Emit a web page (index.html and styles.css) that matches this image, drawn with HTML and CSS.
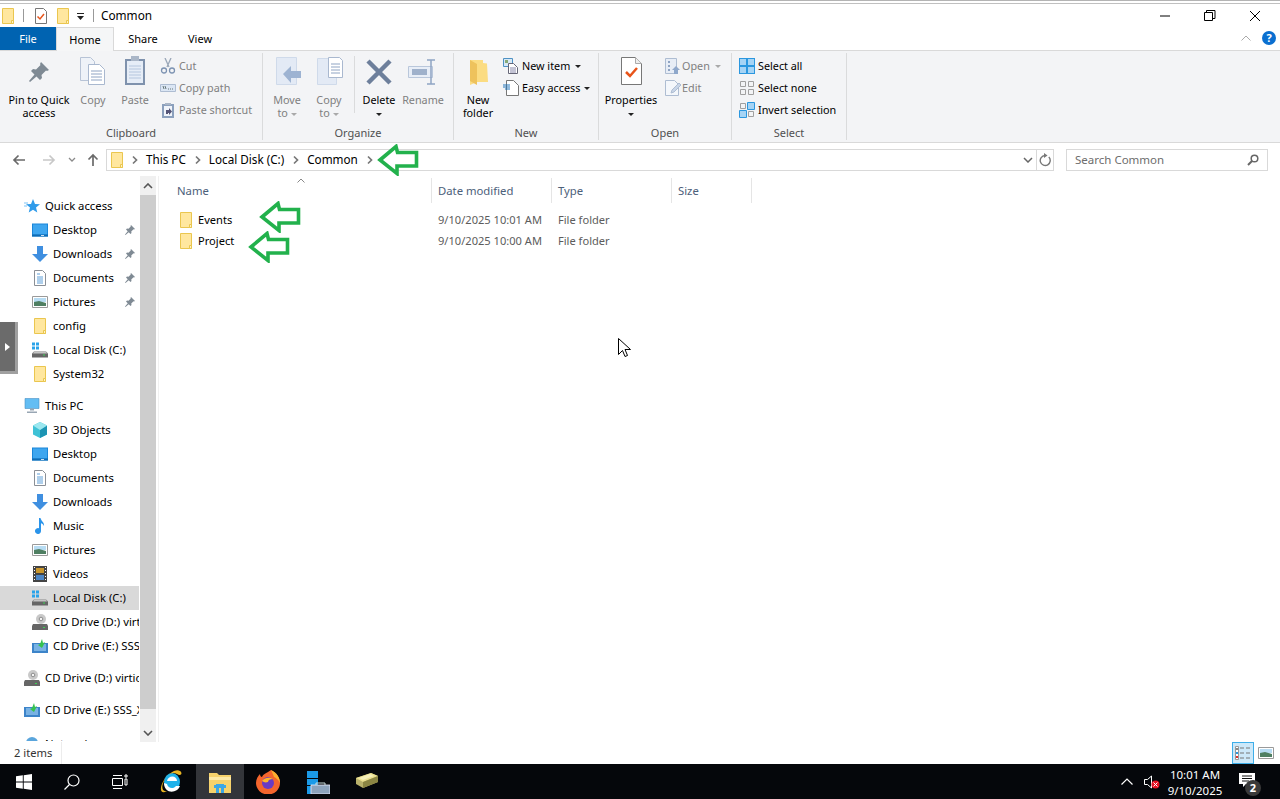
FILE: index.html
```html
<!DOCTYPE html>
<html lang="en">
<head>
<meta charset="utf-8">
<title>Common</title>
<link rel="stylesheet" href="styles.css">
</head>
<body>
<svg class="defs" aria-hidden="true">
  <symbol id="folder" viewBox="0 0 12 16"><path d="M.5.5h11v15H.5z" fill="#ffe79f" stroke="#eac64f"/><path d="M9.5 12.5h2v3h-2z" fill="#fff3c4" stroke="#eac64f"/></symbol>
  <symbol id="pin" viewBox="0 0 24 24"><path d="M14 2l8 8-2 1-1-.5-4.500 4.500.5 3-2 2-3.500-3.500L3 22l-1-1 5.500-6.500L4 11l2-2 3 .5L13.500 5 13 4z" fill="#7f8a94"/></symbol>
  <symbol id="desktop" viewBox="0 0 16 13"><path d="M0 0h16v13H0z" fill="#1a86d9"/><path d="M1 1h14v10H1z" fill="#3ea6ef"/><path d="M0 11h16v2H0z" fill="#0f6cb5"/><path d="M9 11.500h3v.8H9z" fill="#fff"/></symbol>
  <symbol id="download" viewBox="0 0 16 16"><path d="M5 0h6v8h5l-8 8-8-8h5z" fill="#3f8fe0"/></symbol>
  <symbol id="docs" viewBox="0 0 12 16"><path d="M.5.5h8l3 3v12H.5z" fill="#fff" stroke="#8a8f96"/><path d="M3 4h3M3 7h6M3 9h6M3 11h6M3 13h6" stroke="#5f9fd8"/></symbol>
  <symbol id="pics" viewBox="0 0 16 12"><path d="M.5.5h15v11H.5z" fill="#fff" stroke="#9a9a9a"/><path d="M2 2h12v4H2z" fill="#b7dcf3"/><path d="M2 6l5-1 7 2v3H2z" fill="#4f7f62"/></symbol>
  <symbol id="disk" viewBox="0 0 16 15"><path d="M0 0h3v3H0zM4 0h3v3H4zM0 4h3v3H0zM4 4h3v3H4z" fill="#2aa3ea"/><path d="M2 9h12l2 2v4H0v-4z" fill="#666"/><path d="M2 9h12l1 2H1z" fill="#c4c4c4"/><path d="M11 12h2v1h-2z" fill="#39d353"/></symbol>
  <symbol id="cd" viewBox="0 0 16 16"><circle cx="9" cy="5" r="5" fill="#c9c9c9"/><circle cx="9" cy="5" r="1.800" fill="#f3f3f3" stroke="#8d8d8d"/><path d="M1 10h14l1 2v4H0v-4z" fill="#666"/><path d="M11 13h2v1h-2z" fill="#39d353"/></symbol>
  <symbol id="cdset" viewBox="0 0 16 14"><path d="M0 4h16v10H0z" fill="#3d84c9"/><path d="M2 5h12v7H2z" fill="#79b2e4"/><path d="M10 0l1 4 2-1-3 6-4-3 2-1z" fill="#36c24f"/></symbol>
  <symbol id="chev" viewBox="0 0 6 10"><path d="M1 1.500l3.500 3.500-3.500 3.500" fill="none" stroke="#777" stroke-width="1.700"/></symbol>
  <symbol id="green" viewBox="0 0 42 32"><path d="M3 16L19 2.500l1.500 6H39.500V22H20v7.500z" fill="none" stroke="#22b14c" stroke-width="3.600"/></symbol>
</svg>

<div class="frame-lines"></div>

<header class="titlebar">
  <svg class="ic-folder"><use href="#folder"/></svg>
  <i class="qsep q1"></i>
  <svg class="ic-prop" viewBox="0 0 12 16"><path d="M.5.5h8l3 3v12H.5z" fill="#fff" stroke="#777"/><path d="M2.500 8.500l2.500 2.500 4-5" fill="none" stroke="#e8541a" stroke-width="1.500"/></svg>
  <svg class="ic-folder q2"><use href="#folder"/></svg>
  <svg class="ic-qdrop" viewBox="0 0 8 8"><path d="M0 1h7v1H0zM0 4h7L3.500 8z" fill="#222"/></svg>
  <i class="qsep q3"></i>
  <span class="wintitle">Common</span>
  <div class="winbtns">
    <svg class="wb" viewBox="0 0 12 12"><path d="M1 6h10" stroke="#000"/></svg>
    <svg class="wb" viewBox="0 0 12 12"><path d="M.5 2.500h8v8h-8zM2.500 2.500v-2h8.500v8h-2.500" fill="none" stroke="#000"/></svg>
    <svg class="wb" viewBox="0 0 12 12"><path d="M1 1l10 10M11 1L1 11" stroke="#000"/></svg>
  </div>
</header>

<nav class="tabs">
  <span class="tab file">File</span>
  <span class="tab home">Home</span>
  <span class="tab share">Share</span>
  <span class="tab view">View</span>
  <svg class="collapse" viewBox="0 0 10 6"><path d="M.5 5.500L5 1l4.500 4.500" fill="none" stroke="#aaa"/></svg>
  <span class="help">?</span>
</nav>

<section class="ribbon">
  <div class="group g-clip">
    <div class="tools">
      <div class="big w-pin"><svg class="bigic" viewBox="0 0 32 32"><use href="#pin" x="4" y="4" width="24" height="24"/></svg><span>Pin to Quick access</span></div>
      <div class="big w-copy dis"><svg class="bigic" viewBox="0 0 32 32"><path d="M3.500 1.500h10l4 4v19h-14z" fill="#eef2f8" stroke="#b7c3d6"/><path d="M11.500 8.500h11l5 5v15h-16z" fill="#fff" stroke="#a9b8cf"/><path d="M14 15h11M14 18h11M14 21h11M14 24h11" stroke="#8fa4c3"/></svg><span>Copy</span></div>
      <div class="big w-paste dis"><svg class="bigic" viewBox="0 0 32 32"><path d="M6 3h20v26H6z" fill="#7f92ad"/><path d="M8 5h16v22H8z" fill="#e6edf7"/><path d="M12 0h8v5h-8z" fill="#aab6c7"/><path d="M10 10h12M10 13h12M10 16h12M10 19h12M10 22h12" stroke="#b5c6de"/></svg><span>Paste</span></div>
      <div class="smalls s-clip">
        <div class="sm dis"><svg class="smic" viewBox="0 0 16 16"><path d="M5 0l4 9M11 0L7 9" stroke="#9aa7b8" stroke-width="1.300"/><circle cx="4" cy="12.500" r="2.500" fill="none" stroke="#7d93b2" stroke-width="1.300"/><circle cx="12" cy="12.500" r="2.500" fill="none" stroke="#7d93b2" stroke-width="1.300"/></svg>Cut</div>
        <div class="sm dis"><svg class="smic" viewBox="0 0 16 16"><path d="M.5 4.500h15v7H.5z" fill="#dbe6f4" stroke="#aebdd2"/><path d="M3 6l1 3M5 6l1 3M8 9h1M10 9h1M12 9h1" stroke="#677"/></svg>Copy path</div>
        <div class="sm dis"><svg class="smic" viewBox="0 0 16 16"><path d="M2 2h12v14H2z" fill="#8ba0bd"/><path d="M4 4h8v10H4z" fill="#f0f4fa"/><path d="M5 1h6v2H5z" fill="#aab6c7"/><path d="M6 12V8h3V6l3 3.500L9 13v-2H8v1z" fill="#557"/></svg>Paste shortcut</div>
      </div>
    </div>
    <div class="glabel">Clipboard</div>
  </div>

  <div class="group g-org">
    <div class="tools">
      <div class="big w-move dis"><svg class="bigic" viewBox="0 0 32 32"><path d="M5.500 1.500h20v27h-20z" fill="#e3eaf5" stroke="#cfdaea"/><path d="M12 18l8-8v5h10v7H20v5z" fill="#9db3d2"/></svg><span>Move<br>to <em class="cd"></em></span></div>
      <div class="big w-cpto dis"><svg class="bigic" viewBox="0 0 32 32"><path d="M4.500 2.500h19v26h-19z" fill="#e3eaf5" stroke="#cfdaea"/><path d="M15.500 1.500h11l3 3v17h-14z" fill="#fff" stroke="#a9b8cf"/><path d="M18 8h9M18 11h9M18 14h9M18 17h9" stroke="#8fa4c3"/></svg><span>Copy<br>to <em class="cd"></em></span></div>
      <i class="vsep"></i>
      <div class="big w-del"><svg class="bigic" viewBox="0 0 32 32"><path d="M5 5l22 22M27 5L5 27" stroke="#6d7f9b" stroke-width="4.500"/></svg><span>Delete<br><em class="cd dark"></em></span></div>
      <div class="big w-ren dis"><svg class="bigic" viewBox="0 0 32 32"><path d="M1.500 10.500h24v11h-24z" fill="#e8eef7" stroke="#b9c7db"/><path d="M5 13h15v6H5z" fill="#9fb1cb"/><path d="M24 4v24M20 4h8M20 28h8" fill="none" stroke="#8fa4c3" stroke-width="1.500"/></svg><span>Rename</span></div>
    </div>
    <div class="glabel">Organize</div>
  </div>

  <div class="group g-new">
    <div class="tools">
      <div class="big w-newf"><svg class="bigic" viewBox="0 0 32 32"><path d="M8 4h13v3l4 .5L26 26H15l-7 3z" fill="#fbdc82"/><path d="M8 4l7 4v21l-7-4z" fill="#eec25c"/></svg><span>New<br>folder</span></div>
      <div class="smalls s-new">
        <div class="sm"><svg class="smic" viewBox="0 0 16 16"><path d="M.5.500h9v8h-9z" fill="#d8e9f6" stroke="#4f92c4"/><path d="M2 2h3v3H2z" fill="#8a7"/><path d="M5.500 5.500h5l4 4v6h-9z" fill="#fff" stroke="#667"/><path d="M7 10h6M7 12h6M7 14h6" stroke="#88a"/></svg>New item <em class="cd dark sp"></em></div>
        <div class="sm"><svg class="smic" viewBox="0 0 16 16"><path d="M3.500.500h7l5 5v10h-12z" fill="#fff" stroke="#777"/><path d="M0 5h7M0 7h7M2 9h5" stroke="#2277bb"/></svg>Easy access <em class="cd dark"></em></div>
      </div>
    </div>
    <div class="glabel">New</div>
  </div>

  <div class="group g-open">
    <div class="tools">
      <div class="big w-prop"><svg class="bigic" viewBox="0 0 32 32"><path d="M6.500 1.500h14l6 6v21h-20z" fill="#fff" stroke="#777"/><path d="M20.500 1.500v6h6" fill="#eee" stroke="#aaa"/><path d="M11 16l4 4 7-8" fill="none" stroke="#e8541a" stroke-width="2.500"/></svg><span>Properties<br><em class="cd dark"></em></span></div>
      <div class="smalls s-open">
        <div class="sm dis"><svg class="smic" viewBox="0 0 16 16"><path d="M.5.500h11v15H.5z" fill="#e7edf6" stroke="#aebdd2"/><path d="M3 3h2v2H3zM3 7h2v2H3zM3 11h2v2H3z" fill="#8fa4c3"/><path d="M11 8l4 4h-2v4h-4v-4H7z" fill="#8fa8cb"/></svg>Open <em class="cd sp"></em></div>
        <div class="sm dis"><svg class="smic" viewBox="0 0 16 16"><path d="M.5.500h9l4 4v11H.500z" fill="#f4f7fb" stroke="#aebdd2"/><path d="M6 13l1-3 7-7 2 2-7 7z" fill="#c9d6e8" stroke="#aebdd2"/></svg>Edit</div>
      </div>
    </div>
    <div class="glabel">Open</div>
  </div>

  <div class="group g-sel">
    <div class="tools">
      <div class="smalls s-sel">
        <div class="sm"><svg class="smic" viewBox="0 0 16 16"><path d="M0 0h16v16H0z" fill="#2b97df"/><path d="M1 1h6v6H1zM9 1h6v6H9zM1 9h6v6H1zM9 9h6v6H9z" fill="#a6d4f5"/></svg>Select all</div>
        <div class="sm"><svg class="smic" viewBox="0 0 16 16"><path d="M1.500 1.500h5v5h-5zM9.500 1.500h5v5h-5zM1.500 9.500h5v5h-5zM9.500 9.500h5v5h-5z" fill="none" stroke="#a0a0a0"/></svg>Select none</div>
        <div class="sm"><svg class="smic" viewBox="0 0 16 16"><path d="M1.500 1.500h5v5h-5zM9.500 9.500h5v5h-5z" fill="none" stroke="#a0a0a0"/><path d="M8.500.5h7v7h-7zM.5 8.500h7v7h-7z" fill="#a6d4f5" stroke="#2b97df"/></svg>Invert selection</div>
      </div>
    </div>
    <div class="glabel">Select</div>
  </div>
</section>

<div class="addrrow">
  <div class="navbtns">
    <svg class="nb back" viewBox="0 0 14 12"><path d="M13 6H2M6.500 1.500L2 6l4.500 4.500" fill="none" stroke="#6a6a6a" stroke-width="1.700"/></svg>
    <svg class="nb fwd" viewBox="0 0 14 12"><path d="M1 6h11M7.500 1.500L12 6l-4.500 4.500" fill="none" stroke="#c8c8c8" stroke-width="1.700"/></svg>
    <svg class="nb hist" viewBox="0 0 8 6"><path d="M1 1l3 3 3-3" fill="none" stroke="#8a8a8a" stroke-width="1.300"/></svg>
    <svg class="nb up" viewBox="0 0 12 14"><path d="M6 13V2M1.500 6.500L6 2l4.500 4.500" fill="none" stroke="#6a6a6a" stroke-width="1.700"/></svg>
  </div>
  <div class="addr">
    <svg class="ic-folder"><use href="#folder"/></svg>
    <svg class="crumbchev c0"><use href="#chev"/></svg><span class="crumb">This PC</span>
    <svg class="crumbchev"><use href="#chev"/></svg><span class="crumb">Local Disk (C:)</span>
    <svg class="crumbchev"><use href="#chev"/></svg><span class="crumb">Common</span>
    <svg class="crumbchev"><use href="#chev"/></svg>
    <svg class="ddchev" viewBox="0 0 10 6"><path d="M1 1l4 4 4-4" fill="none" stroke="#666" stroke-width="1.500"/></svg>
    <span class="refresh"><svg viewBox="0 0 12 14"><path d="M9.800 4A5 5 0 1 1 6 2.500" fill="none" stroke="#777" stroke-width="1.400"/><path d="M5 0l3.500 2.500L5 5z" fill="#777"/></svg></span>
  </div>
  <div class="search"><span>Search Common</span><svg viewBox="0 0 12 12"><circle cx="7.500" cy="4.500" r="3.300" fill="none" stroke="#666" stroke-width="1.500"/><path d="M5 7l-4 4" stroke="#666" stroke-width="2"/></svg></div>
</div>

<main class="main">
  <aside class="tree">
    <div class="navlist">
      <div class="row l1"><svg class="ti" viewBox="0 0 16 16"><path d="M9 1l2 5 5 .3-4 3.200 1.300 5L9 11.800l-4.300 2.700L6 9.500 2 6.300 7 6z" fill="#2f9bea"/><path d="M0 5h4M0 8h3" stroke="#7cc3f5"/></svg>Quick access</div>
      <div class="row l2"><svg class="ti"><use href="#desktop"/></svg><span class="rt">Desktop</span><svg class="rowpin"><use href="#pin"/></svg></div>
      <div class="row l2"><svg class="ti"><use href="#download"/></svg><span class="rt">Downloads</span><svg class="rowpin"><use href="#pin"/></svg></div>
      <div class="row l2"><svg class="ti"><use href="#docs"/></svg><span class="rt">Documents</span><svg class="rowpin"><use href="#pin"/></svg></div>
      <div class="row l2"><svg class="ti"><use href="#pics"/></svg><span class="rt">Pictures</span><svg class="rowpin"><use href="#pin"/></svg></div>
      <div class="row l2"><svg class="ti"><use href="#folder"/></svg>config</div>
      <div class="row l2"><svg class="ti"><use href="#disk"/></svg>Local Disk (C:)</div>
      <div class="row l2"><svg class="ti"><use href="#folder"/></svg>System32</div>
      <div class="row l1 gap"><svg class="ti" viewBox="0 0 16 15"><path d="M1 0h14v10H1z" fill="#63bdf3" stroke="#4a90c4" stroke-width=".6"/><path d="M6 10h4v2H6zM3 13h10v1.500H3z" fill="#98a6b3"/></svg>This PC</div>
      <div class="row l2"><svg class="ti" viewBox="0 0 16 16"><path d="M8 0l7 3.500v9L8 16l-7-3.500v-9z" fill="#3fc2d6"/><path d="M8 8l7-4.500v9L8 16z" fill="#1c94b3"/><path d="M8 0l7 3.500L8 8 1 3.500z" fill="#9ce7ef"/></svg>3D Objects</div>
      <div class="row l2"><svg class="ti"><use href="#desktop"/></svg>Desktop</div>
      <div class="row l2"><svg class="ti"><use href="#docs"/></svg>Documents</div>
      <div class="row l2"><svg class="ti"><use href="#download"/></svg>Downloads</div>
      <div class="row l2"><svg class="ti" viewBox="0 0 16 16"><path d="M7 0h1.500c.5 3 4 4 3.500 8-1-2-2-2.500-3-2.800V13a3 3 0 1 1-2-2.800z" fill="#2a94ea"/></svg>Music</div>
      <div class="row l2"><svg class="ti"><use href="#pics"/></svg>Pictures</div>
      <div class="row l2"><svg class="ti" viewBox="0 0 14 16"><path d="M0 0h14v16H0z" fill="#444"/><path d="M3 2h8v5H3z" fill="#c9962c"/><path d="M3 9h8v5H3z" fill="#4c86c7"/><path d="M1 1h1v1H1zM1 4h1v1H1zM1 7h1v1H1zM1 10h1v1H1zM1 13h1v1H1zM12 1h1v1h-1zM12 4h1v1h-1zM12 7h1v1h-1zM12 10h1v1h-1zM12 13h1v1h-1z" fill="#fff"/></svg>Videos</div>
      <div class="row l2 sel"><svg class="ti"><use href="#disk"/></svg>Local Disk (C:)</div>
      <div class="row l2"><svg class="ti"><use href="#cd"/></svg>CD Drive (D:) virtio-win</div>
      <div class="row l2"><svg class="ti"><use href="#cdset"/></svg>CD Drive (E:) SSS_X64</div>
      <div class="row l1 gap"><svg class="ti"><use href="#cd"/></svg>CD Drive (D:) virtio-win</div>
      <div class="row l1 gap"><svg class="ti"><use href="#cdset"/></svg>CD Drive (E:) SSS_X64</div>
      <div class="row l1 gap last"><svg class="ti" viewBox="0 0 16 16"><circle cx="8" cy="7" r="6" fill="#5aa5dc"/></svg>Network</div>
    </div>
    <div class="scroll">
      <div class="sbtn"><svg viewBox="0 0 10 6"><path d="M1 5l4-4 4 4" fill="none" stroke="#555" stroke-width="1.600"/></svg></div>
      <div class="thumb"></div>
      <div class="strack"></div>
      <div class="sbtn"><svg viewBox="0 0 10 6"><path d="M1 1l4 4 4-4" fill="none" stroke="#555" stroke-width="1.600"/></svg></div>
    </div>
  </aside>
  <section class="files">
    <div class="fhead">
      <span class="hc hname">Name<svg class="sortc" viewBox="0 0 8 5"><path d="M.5 4.500L4 1l3.500 3.500" fill="none" stroke="#888"/></svg></span>
      <span class="hc hdate">Date modified</span>
      <span class="hc htype">Type</span>
      <span class="hc hsize">Size</span>
    </div>
    <div class="frow"><span class="fname"><svg class="ic-folder"><use href="#folder"/></svg>Events</span><span class="fdate">9/10/2025 10:01 AM</span><span class="ftype">File folder</span></div>
    <div class="frow"><span class="fname"><svg class="ic-folder"><use href="#folder"/></svg>Project</span><span class="fdate">9/10/2025 10:00 AM</span><span class="ftype">File folder</span></div>
  </section>
</main>

<footer class="status">
  <span class="count">2 items</span>
  <div class="views">
    <span class="vbtn on"><svg viewBox="0 0 16 14"><path d="M.5.500h3v13h-3z" fill="#fff" stroke="#999"/><path d="M1 2h2v2H1z" fill="#888"/><path d="M1 6h2v2H1z" fill="#2b97df"/><path d="M1 10h2v2H1z" fill="#d33"/><path d="M5 2h4M11 2h4M5 7h4M11 7h4M5 12h4M11 12h4" stroke="#777"/></svg></span>
    <span class="vbtn"><svg><use href="#pics"/></svg></span>
  </div>
</footer>

<footer class="taskbar">
  <span class="tb"><svg viewBox="0 0 16 16"><path d="M0 2.300L6.800 1.300v6.200H0zM7.700 1.200L16 0v7.500H7.700zM0 8.500h6.800v6.200L0 13.700zM7.700 8.500H16V16l-8.300-1.200z" fill="#fff"/></svg></span>
  <span class="tb"><svg viewBox="0 0 16 16"><circle cx="9.500" cy="6.500" r="5.500" fill="none" stroke="#fff" stroke-width="1.200"/><path d="M5.500 10.500L.5 15.500" stroke="#fff" stroke-width="1.300"/></svg></span>
  <span class="tb"><svg viewBox="0 0 16 16"><path d="M.5 4.500h10v7H.5zM1 1.500h9M1 14.500h9M13 1h2v2h-2zM13 5h2v6h-2z" fill="none" stroke="#fff"/></svg></span>
  <span class="tb large after-views"><svg viewBox="0 0 24 24"><ellipse cx="12" cy="12" rx="8" ry="9" fill="#1eb1ea"/><path d="M7 11h10c0-6-9-6-10 0zM7 14c1 5 7 5 9 2h4c-3 8-16 8-16-3z" fill="#fff"/><path d="M20 1c3 2 1 6-3 3-6-3-11 2-13 7-3 6-2 11 3 10-7 4-8-3-3-11C8 4 16-2 20 1z" fill="#e8b422"/></svg></span>
  <span class="tb active large"><svg viewBox="0 0 24 24"><path d="M1 3h8l2 2h12v18H1z" fill="#f6d26c"/><path d="M1 7h22v3H1z" fill="#fde9a6"/><path d="M8 14h8v9h-3v-5h-2v5H8z" fill="#3ba7e6"/><path d="M6 15h12v3H6z" fill="#3ba7e6"/></svg></span>
  <span class="tb large"><svg viewBox="0 0 24 24"><path d="M15 0c6 3 9 8 9 13a12 11.500 0 0 1-24 0C0 9 2 6 4 4c0 2 1 3 2 3 1-3 5-4 9-7z" fill="#f4652d"/><path d="M15 0c6 3 9 8 9 13-2-4-4-5-6-6-1-3-2-5-3-7z" fill="#fbb02f"/><circle cx="12" cy="13" r="6" fill="#6a3bc4"/><path d="M6 11c3-4 8-4 11-2-3 0-5 1-5 3-3 1-4 0-6-1z" fill="#fdb52a"/></svg></span>
  <span class="tb large t-server"><svg viewBox="0 0 24 24"><path d="M1 1h11v7H1zM1 9h11v6H1zM1 16h4v8H1z" fill="#1b9ae8"/><path d="M5 15h19v9H5z" fill="#8da3bc" stroke="#eef" stroke-width=".8"/><path d="M10 15v-2h9v2" fill="none" stroke="#cdd" stroke-width="1"/></svg></span>
  <span class="tb large t-book"><svg viewBox="0 0 24 24"><path d="M1 8l15-5 7 3v6L8 18 1 14z" fill="#b9b16b"/><path d="M1 8l15-5 7 3-15 6z" fill="#eadf90"/><path d="M4 8l11-4 4 2-11 4z" fill="#f5efba"/><path d="M8 12v6l15-6V6z" fill="#8b8543"/></svg></span>
  <div class="tray">
    <svg class="tcaret" viewBox="0 0 12 7"><path d="M.5 6.500L6 1l5.500 5.500" fill="none" stroke="#fff" stroke-width="1.200"/></svg>
    <span class="tspk"><svg viewBox="0 0 16 14"><path d="M.5 4.500h3l4-3.500v12l-4-3.500h-3z" fill="none" stroke="#fff"/><circle cx="11.500" cy="9.500" r="4" fill="#e81123"/><path d="M9.500 7.500l4 4M13.500 7.500l-4 4" stroke="#fff"/></svg></span>
    <div class="clock"><span>10:01 AM</span><span>9/10/2025</span></div>
    <span class="notif"><svg viewBox="0 0 16 14"><path d="M0 0h16v11H7l-3 3v-3H0z" fill="#fff"/><path d="M3 3h10M3 5.500h10M3 8h7" stroke="#111"/></svg><b>2</b></span>
  </div>
</footer>

<svg class="arrow a1"><use href="#green"/></svg>
<svg class="arrow a2"><use href="#green"/></svg>
<svg class="arrow a3"><use href="#green"/></svg>
<div class="handle"><svg viewBox="0 0 5 8"><path d="M0 0l5 4-5 4z" fill="#fff"/></svg></div>
<svg class="cursor" viewBox="0 0 13 20"><path d="M.5.500v16l4-4 2.500 6 2.500-1-2.500-6h5.500z" fill="#fff" stroke="#000"/></svg>
</body>
</html>
```
FILE: styles.css
```css
* { box-sizing: border-box; }
html, body { margin: 0; height: 799px; overflow: hidden; }
body {
  width: 1280px;
  background: #fff;
  color: #000;
  font: 11.2px/14px "Noto Sans", "Open Sans", sans-serif;
  position: relative;
}
svg { display: block; flex: none; }
.defs { position: absolute; width: 0; height: 0; }
em { font-style: normal; }

.frame-lines { height: 4px; border-top: 1px solid #b4b4b4; border-bottom: 1px solid #c0c0c0; margin-top: 0; background: #fff; }

.titlebar { height: 23px; display: flex; align-items: center; position: relative; padding-left: 2px; }
.ic-folder { width: 12px; height: 16px; }
.qsep { width: 1px; height: 13px; background: #999; }
.q1 { margin-left: 9px; }
.ic-prop { width: 12px; height: 16px; margin-left: 11px; }
.q2 { margin-left: 10px; }
.ic-qdrop { width: 8px; height: 8px; margin-left: 8px; }
.q3 { margin-left: 8px; }
.wintitle { margin-left: 7px; font-size: 11.8px; padding-bottom: 2px; }
.winbtns { margin-left: auto; display: flex; margin-right: 3px; }
.wb { width: 12px; height: 12px; margin: 0 16.500px; }

.tabs { height: 24px; display: flex; align-items: stretch; border-bottom: 1px solid #d9d9d9; position: relative; }
.tab { display: flex; align-items: center; justify-content: center; font-size: 11px; }
.file { width: 56px; height: 23px; background: #0063b1; color: #fff; }
.home { width: 58px; height: 24px; background: #f5f6f7; border: 1px solid #d9d9d9; border-bottom: 0; }
.share { width: 58px; height: 23px; }
.view { width: 56px; height: 23px; }
.collapse { width: 10px; height: 6px; margin: 8px 0 0 auto; }
.help { width: 14px; height: 14px; border-radius: 50%; background: #0a6fd0; color: #fff; font-weight: 700; font-size: 11px; line-height: 14px; text-align: center; margin: 4px 4px 0 11px; }

.ribbon { height: 92px; background: #f3f4f6; border-bottom: 1px solid #d9d9d9; display: flex; padding-top: 2px; }
.group { height: 87px; border-right: 1px solid #dadbdc; display: flex; flex-direction: column; }
.g-clip { width: 263px; }
.g-org { width: 191px; }
.g-new { width: 145px; }
.g-open { width: 133px; }
.g-sel { width: 115px; }
.tools { height: 72px; display: flex; font-size: 10.8px; }
.glabel { text-align: center; color: #505050; height: 14px; line-height: 14px; margin-top: 1px; font-size: 11px; }

.big { display: flex; flex-direction: column; align-items: center; text-align: center; padding-top: 3px; line-height: 13px; }
.bigic { width: 32px; height: 32px; margin-bottom: 5px; }
.dis { color: #808080; }
.w-pin { width: 78px; padding-left: 2px; padding-right: 2px; }
.w-copy { width: 30px; }
.w-paste { width: 30px; margin-left: 12px; }
.s-clip { margin-left: 10px; }
.w-move { width: 40px; margin-left: 4px; }
.w-cpto { width: 40px; margin-left: 2px; }
.vsep { width: 1px; height: 57px; margin: 3px 2px 0 5px; background: #dadbdc; }
.w-del { width: 44px; }
.w-ren { width: 44px; }
.w-newf { width: 48px; }
.s-new { margin-left: 1px; }
.w-prop { width: 64px; }
.s-open { margin-left: 2px; }
.s-open .smic { margin-right: 1px; }
.s-sel { margin-left: 7px; }
.smalls { display: flex; flex-direction: column; padding-top: 2px; }
.sm { height: 22px; display: flex; align-items: center; white-space: nowrap; }
.smic { width: 16px; height: 16px; margin-right: 3px; }
.cd { display: inline-block; width: 0; height: 0; border: 3px solid transparent; border-top: 3px solid #a9a9a9; border-bottom: 0; vertical-align: middle; }
.dark { border-top-color: #222; }
.sm .cd { margin-left: 4px; }
.sm .sp { margin-left: 5px; }

.addrrow { height: 33px; display: flex; align-items: center; }
.navbtns { width: 106px; display: flex; align-items: center; }
.nb.back { width: 14px; height: 12px; margin-left: 12px; }
.nb.fwd { width: 14px; height: 12px; margin-left: 16px; }
.nb.hist { width: 8px; height: 6px; margin-left: 12px; }
.nb.up { width: 12px; height: 14px; margin-left: 11px; }
.addr { width: 948px; height: 22px; border: 1px solid #d9d9d9; display: flex; align-items: center; padding-left: 4px; position: relative; }
.crumbchev { width: 6px; height: 10px; margin: 0 8px; }
.c0 { margin-left: 9px; }
.crumb { font-size: 11.7px; padding-bottom: 1px; margin-right: 1px; }
.ddchev { width: 10px; height: 6px; margin-left: auto; margin-right: 3px; }
.refresh { width: 17px; height: 20px; border-left: 1px solid #d9d9d9; display: flex; align-items: center; justify-content: center; }
.refresh svg { width: 12px; height: 14px; }
.search { width: 202px; height: 22px; border: 1px solid #d9d9d9; margin-left: 12px; display: flex; align-items: center; justify-content: space-between; padding: 0 8px; color: #6d6d6d; font-size: 11.5px; }
.search svg { width: 12px; height: 12px; }

.main { height: 566px; display: flex; }
.tree { width: 159px; display: flex; border-right: 1px solid #f0f0f0; padding-right: 3px; flex: none; }
.navlist { width: 140px; height: 565px; overflow: hidden; padding-top: 18px; flex: none; }
.row { height: 24px; display: flex; align-items: center; white-space: nowrap; width: 139px; overflow: hidden; font-size: 11.3px; }
.l1 { padding-left: 24px; }
.l2 { padding-left: 32px; }
.ti { width: 16px; height: 16px; margin-right: 5px; }
.rt { width: 67px; }
.rowpin { width: 12px; height: 12px; margin-left: auto; margin-right: 3px; }
.gap { margin-top: 8px; }
.last { margin-top: 10px; }
.sel { background: #d9d9d9; }

.scroll { width: 16px; display: flex; flex-direction: column; flex: none; background: #f0f0f0; }
.sbtn { height: 19px; display: flex; align-items: center; justify-content: center; }
.sbtn svg { width: 10px; height: 6px; }
.thumb { height: 514px; background: #cdcdcd; }
.strack { height: 14px; }

.files { flex: 1; padding-left: 12px; }
.fhead { display: flex; height: 33px; padding-top: 2px; color: #4c607a; }
.hc { height: 25px; display: flex; align-items: center; padding-left: 6px; border-right: 1px solid #e5e5e5; font-size: 11.3px; position: relative; }
.hname { width: 261px; }
.hdate { width: 120px; }
.htype { width: 120px; }
.hsize { width: 80px; }
.sortc { position: absolute; left: 126px; top: 0; width: 8px; height: 5px; }
.frow { display: flex; height: 21px; align-items: center; color: #5c5c5c; font-size: 11.1px; }
.fname { width: 261px; display: flex; align-items: center; color: #000; padding-left: 9px; }
.fname .ic-folder { margin-right: 6px; }
.fdate { width: 120px; padding-left: 6px; }
.ftype { padding-left: 6px; }

.status { height: 22px; display: flex; align-items: center; justify-content: space-between; padding-left: 14px; color: #333; }
.count { height: 22px; line-height: 22px; padding-right: 9px; border-right: 1px solid #ececec; }
.views { display: flex; margin-right: 3px; }
.vbtn { width: 22px; height: 22px; display: flex; align-items: center; justify-content: center; }
.vbtn.on { background: #cce8f9; border: 1px solid #3daee9; margin-right: 1px; }
.vbtn svg { width: 16px; height: 14px; }

.taskbar { height: 35px; background: #05070b; display: flex; color: #fff; }
.tb { width: 48px; height: 35px; display: flex; align-items: center; justify-content: center; }
.tb svg { width: 16px; height: 16px; }
.tb.large svg { width: 24px; height: 24px; }
.after-views { margin-left: 4px; }
.t-server { margin-left: 2px; }
.t-book { margin-left: 1px; }
.active { background: #33353a; }
.tray { margin-left: auto; display: flex; align-items: center; padding-right: 9px; }
.tcaret { width: 12px; height: 7px; margin-right: 11px; }
.tspk { width: 18px; display: flex; margin-right: 5px; }
.tspk svg { width: 16px; height: 14px; }
.clock { width: 56px; display: flex; flex-direction: column; align-items: center; font-size: 11.5px; line-height: 16px; padding-top: 2px; }
.notif { width: 48px; height: 35px; position: relative; display: flex; align-items: center; justify-content: center; }
.notif svg { width: 16px; height: 14px; margin-top: -4px; }
.notif b { position: absolute; left: 22px; top: 16px; width: 16px; height: 16px; border-radius: 50%; background: #3a3a3a; font-size: 11px; line-height: 16px; text-align: center; }

.arrow { position: absolute; width: 42px; height: 32px; }
.a1 { left: 377px; top: 144px; }
.a2 { left: 259px; top: 201px; }
.a3 { left: 248px; top: 231px; }
.handle { position: absolute; left: 0; top: 322px; width: 18px; height: 52px; background: #6b6b6b; border-right: 3px solid #a0a0a0; border-bottom: 3px solid #a0a0a0; display: flex; align-items: center; padding-left: 5px; }
.handle svg { width: 5px; height: 8px; }
.cursor { position: absolute; left: 618px; top: 338px; width: 13px; height: 20px; }
```
